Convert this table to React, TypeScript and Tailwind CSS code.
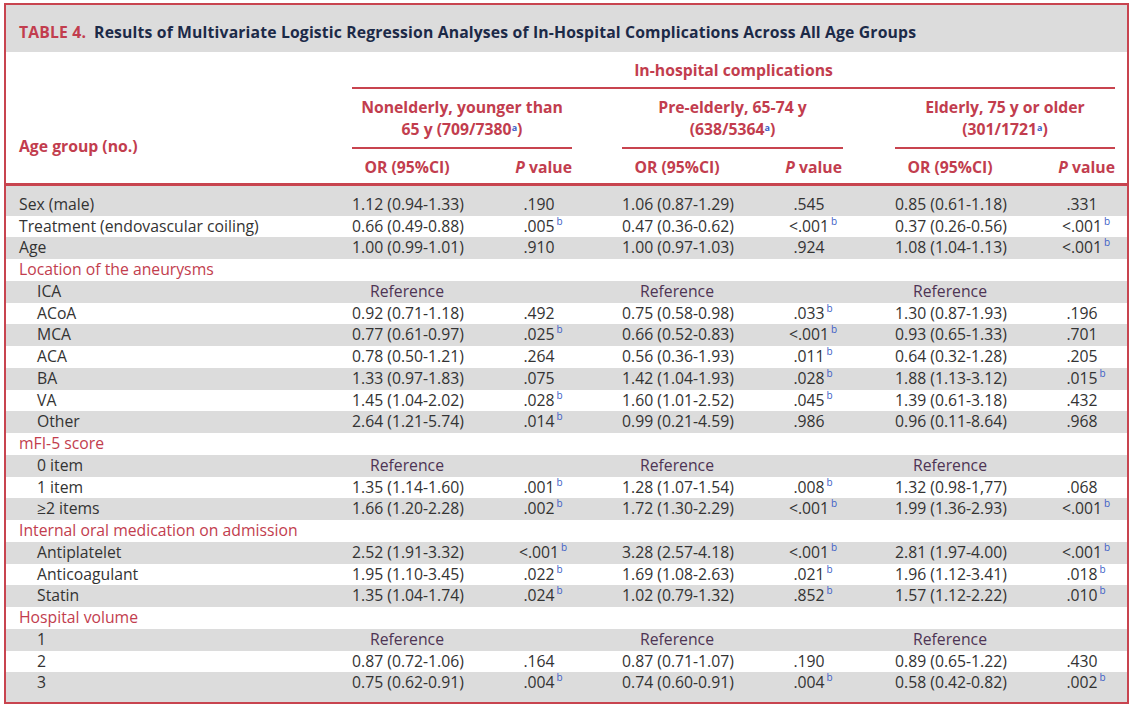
import React from 'react';

// one block = OR + P value for an age group
type Cell = { or: string; p: string } | 'ref';
type Row = {
  label: string;
  kind: 'item' | 'sub' | 'section';
  cells?: [Cell, Cell, Cell];
};

const REF: [Cell, Cell, Cell] = ['ref', 'ref', 'ref'];
const c = (or: string, p: string): Cell => ({ or, p });

const rows: Row[] = [
  { label: 'Sex (male)', kind: 'item', cells: [c('1.12 (0.94-1.33)', '.190'), c('1.06 (0.87-1.29)', '.545'), c('0.85 (0.61-1.18)', '.331')] },
  { label: 'Treatment (endovascular coiling)', kind: 'item', cells: [c('0.66 (0.49-0.88)', '.005b'), c('0.47 (0.36-0.62)', '<.001b'), c('0.37 (0.26-0.56)', '<.001b')] },
  { label: 'Age', kind: 'item', cells: [c('1.00 (0.99-1.01)', '.910'), c('1.00 (0.97-1.03)', '.924'), c('1.08 (1.04-1.13)', '<.001b')] },
  { label: 'Location of the aneurysms', kind: 'section' },
  { label: 'ICA', kind: 'sub', cells: REF },
  { label: 'ACoA', kind: 'sub', cells: [c('0.92 (0.71-1.18)', '.492'), c('0.75 (0.58-0.98)', '.033b'), c('1.30 (0.87-1.93)', '.196')] },
  { label: 'MCA', kind: 'sub', cells: [c('0.77 (0.61-0.97)', '.025b'), c('0.66 (0.52-0.83)', '<.001b'), c('0.93 (0.65-1.33)', '.701')] },
  { label: 'ACA', kind: 'sub', cells: [c('0.78 (0.50-1.21)', '.264'), c('0.56 (0.36-1.93)', '.011b'), c('0.64 (0.32-1.28)', '.205')] },
  { label: 'BA', kind: 'sub', cells: [c('1.33 (0.97-1.83)', '.075'), c('1.42 (1.04-1.93)', '.028b'), c('1.88 (1.13-3.12)', '.015b')] },
  { label: 'VA', kind: 'sub', cells: [c('1.45 (1.04-2.02)', '.028b'), c('1.60 (1.01-2.52)', '.045b'), c('1.39 (0.61-3.18)', '.432')] },
  { label: 'Other', kind: 'sub', cells: [c('2.64 (1.21-5.74)', '.014b'), c('0.99 (0.21-4.59)', '.986'), c('0.96 (0.11-8.64)', '.968')] },
  { label: 'mFI-5 score', kind: 'section' },
  { label: '0 item', kind: 'sub', cells: REF },
  { label: '1 item', kind: 'sub', cells: [c('1.35 (1.14-1.60)', '.001b'), c('1.28 (1.07-1.54)', '.008b'), c('1.32 (0.98-1,77)', '.068')] },
  { label: '≥2 items', kind: 'sub', cells: [c('1.66 (1.20-2.28)', '.002b'), c('1.72 (1.30-2.29)', '<.001b'), c('1.99 (1.36-2.93)', '<.001b')] },
  { label: 'Internal oral medication on admission', kind: 'section' },
  { label: 'Antiplatelet', kind: 'sub', cells: [c('2.52 (1.91-3.32)', '<.001b'), c('3.28 (2.57-4.18)', '<.001b'), c('2.81 (1.97-4.00)', '<.001b')] },
  { label: 'Anticoagulant', kind: 'sub', cells: [c('1.95 (1.10-3.45)', '.022b'), c('1.69 (1.08-2.63)', '.021b'), c('1.96 (1.12-3.41)', '.018b')] },
  { label: 'Statin', kind: 'sub', cells: [c('1.35 (1.04-1.74)', '.024b'), c('1.02 (0.79-1.32)', '.852b'), c('1.57 (1.12-2.22)', '.010b')] },
  { label: 'Hospital volume', kind: 'section' },
  { label: '1', kind: 'sub', cells: REF },
  { label: '2', kind: 'sub', cells: [c('0.87 (0.72-1.06)', '.164'), c('0.87 (0.71-1.07)', '.190'), c('0.89 (0.65-1.22)', '.430')] },
  { label: '3', kind: 'sub', cells: [c('0.75 (0.62-0.91)', '.004b'), c('0.74 (0.60-0.91)', '.004b'), c('0.58 (0.42-0.82)', '.002b')] },
];

// block widths / left gaps, measured off the rules in the header
const blockCls = ['w-[220px]', 'ml-[50px] w-[221px]', 'ml-[52px] w-[220px]'];

function PValue({ p }: { p: string }) {
  const sig = p.endsWith('b');
  const num = sig ? p.slice(0, -1) : p;
  return (
    <span className="relative inline-block">
      {num}
      {sig && (
        <span className="absolute left-full top-[0px] pl-[2px] text-[10px] leading-none text-[#3e5fc6]">b</span>
      )}
    </span>
  );
}

function BodyRow({ row, index, last }: { row: Row; index: number; last: boolean }) {
  const bg = index % 2 === 0 ? 'bg-[#dcdcdc]' : 'bg-white';
  const first = index === 0;
  const size = first ? 'h-[29.5px] pt-[7.75px]' : last ? 'h-[29.5px] pb-[7.75px]' : 'h-[21.75px]';
  const labelCls =
    row.kind === 'section'
      ? 'pl-[13px] text-[#c23d4e]'
      : row.kind === 'sub'
        ? 'pl-[31px] text-[#333]'
        : 'pl-[13px] text-[#333]';

  return (
    <div className={`flex leading-[21.75px] ${bg} ${size}`}>
      <div className={`w-[346px] whitespace-nowrap ${labelCls}`}>{row.label}</div>
      {row.cells?.map((cell, i) => (
        <div key={i} className={`flex ${blockCls[i]}`}>
          {cell === 'ref' ? (
            <div className="w-[110px] whitespace-nowrap text-center text-[#4e3454]">Reference</div>
          ) : (
            <>
              <div className="w-[110px] whitespace-nowrap text-center text-[#333]">{cell.or}</div>
              <div className="w-[110px] whitespace-nowrap pl-[44px] text-center text-[#333]">
                <PValue p={cell.p} />
              </div>
            </>
          )}
        </div>
      ))}
    </div>
  );
}

function Header() {
  const groups = [
    ['Nonelderly, younger than', '65 y (709/7380', ')'],
    ['Pre-elderly, 65-74 y', '(638/5364', ')'],
    ['Elderly, 75 y or older', '(301/1721', ')'],
  ];
  return (
    <>
      <div className="flex h-[131px] bg-white font-bold text-[#c23d4e]">
        <div className="flex w-[346px] items-end pb-[24px] pl-[13px]">Age group (no.)</div>
        <div className="flex w-[763px] flex-col">
          <div className="flex h-[37px] items-center justify-center border-b-2 border-[#c8444f] pt-[3px]">
            In-hospital complications
          </div>
          <div className="flex h-[60px]">
            {groups.map((g, i) => (
              <div
                key={i}
                className={`flex flex-col items-center justify-center whitespace-nowrap border-b-2 border-[#c8444f] leading-[22px] ${blockCls[i]}`}
              >
                <span>{g[0]}</span>
                <span>
                  {g[1]}
                  <sup className="text-[9px] text-[#3e5fc6]">a</sup>
                  {g[2]}
                </span>
              </div>
            ))}
          </div>
          <div className="flex h-[34px]">
            {groups.map((_, i) => (
              <div key={i} className={`flex items-center pt-[4px] ${blockCls[i]}`}>
                <div className="w-[110px] whitespace-nowrap text-center">OR (95%CI)</div>
                <div className="w-[110px] whitespace-nowrap text-right">
                  <i>P</i> value
                </div>
              </div>
            ))}
          </div>
        </div>
      </div>
      <div className="h-[3px] bg-[#c8444f]" />
    </>
  );
}

export default function App() {
  return (
    <div className="h-[707px] w-[1130px] bg-white pl-[4px] pt-[3px] font-['Open_Sans',sans-serif] text-[15.75px]">
      <div className="w-[1125px] border-2 border-[#c8444f]">
        <div className="flex h-[47px] items-center whitespace-nowrap bg-[#dcdcdc] pl-[13px] pt-[9px] font-bold tracking-[0.15px]">
          <span className="text-[#c23d4e]">TABLE 4.</span>
          <span className="ml-[8px] text-[#1c2a48]">
            Results of Multivariate Logistic Regression Analyses of In-Hospital Complications Across All Age Groups
          </span>
        </div>
        <Header />
        {rows.map((r, i) => (
          <BodyRow key={i} row={r} index={i} last={i === rows.length - 1} />
        ))}
      </div>
    </div>
  );
}
